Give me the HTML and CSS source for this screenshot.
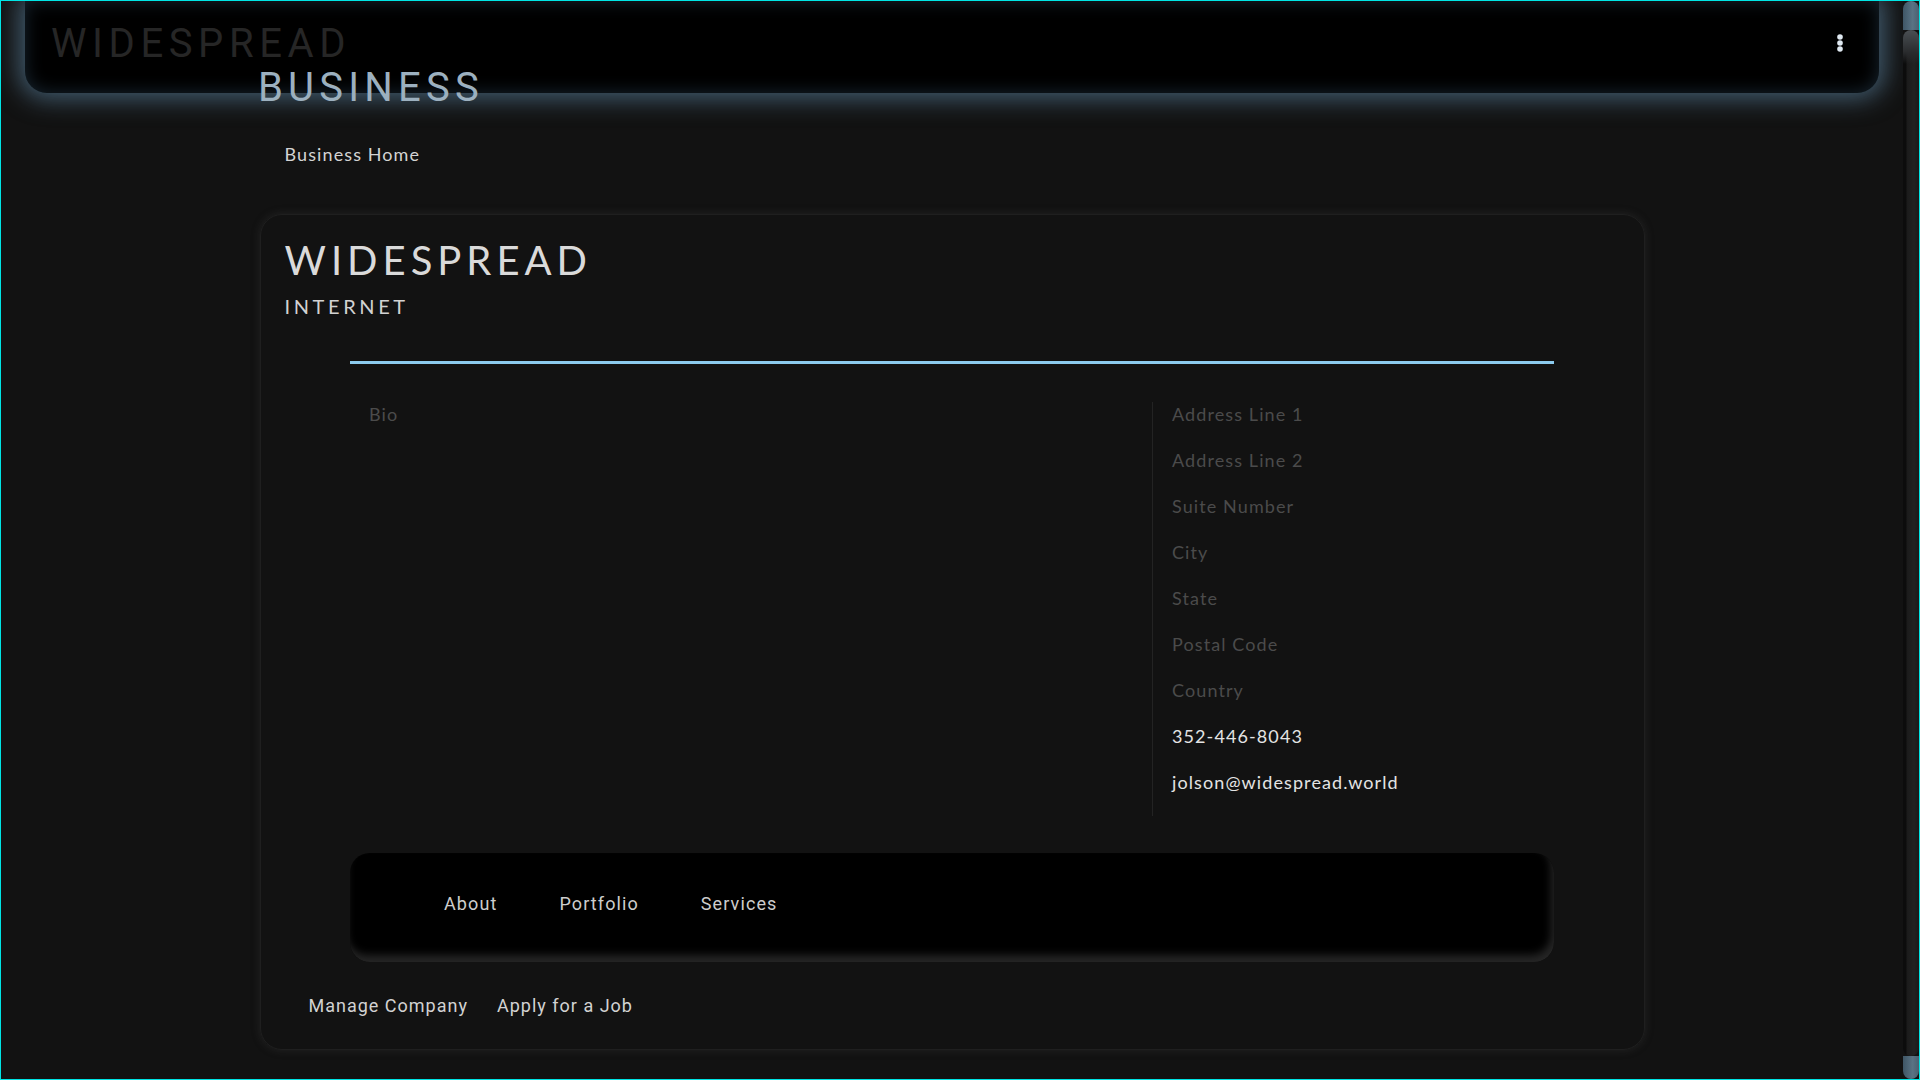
FILE: index.html
```html
<!DOCTYPE html>
<html lang="en">
<head>
<meta charset="utf-8">
<title>Widespread Business</title>
<link rel="stylesheet" href="styles.css">
</head>
<body>
<div class="frame">
  <div class="page">
    <header class="topbar">
      <div class="brand">
        <span class="brand-line1">WIDESPREAD</span>
        <span class="brand-line2">BUSINESS</span>
      </div>
      <button class="kebab" aria-label="menu">
        <svg width="8" height="20" viewBox="0 0 8 20"><circle cx="4" cy="4" r="2.8" fill="#dfe9f1"/><circle cx="4" cy="10" r="2.8" fill="#dfe9f1"/><circle cx="4" cy="16" r="2.8" fill="#dfe9f1"/></svg>
      </button>
    </header>

    <main class="main">
      <nav class="crumbs"><a href="#">Business Home</a></nav>

      <section class="card">
        <h1 class="title">WIDESPREAD</h1>
        <h2 class="subtitle">INTERNET</h2>

        <div class="rule"></div>

        <div class="details">
          <div class="bio">
            <div class="row placeholder">Bio</div>
          </div>
          <div class="address">
            <div class="row placeholder">Address Line 1</div>
            <div class="row placeholder">Address Line 2</div>
            <div class="row placeholder">Suite Number</div>
            <div class="row placeholder">City</div>
            <div class="row placeholder">State</div>
            <div class="row placeholder">Postal Code</div>
            <div class="row placeholder">Country</div>
            <div class="row value">352-446-8043</div>
            <div class="row value">jolson@widespread.world</div>
          </div>
        </div>

        <nav class="tabs">
          <a href="#">About</a>
          <a href="#">Portfolio</a>
          <a href="#">Services</a>
        </nav>

        <div class="actions">
          <a href="#">Manage Company</a>
          <a href="#">Apply for a Job</a>
        </div>
      </section>
    </main>
  </div>

  <div class="scrollbar">
    <div class="sb-btn sb-top"></div>
    <div class="sb-thumb"></div>
    <div class="sb-btn sb-bottom"></div>
  </div>
</div>
</body>
</html>
```

FILE: styles.css
```css
* { box-sizing: border-box; }

html, body {
  margin: 0;
  padding: 0;
  height: 100%;
  overflow: hidden;
  background: #121212;
}

body {
  font-family: Lato, "Open Sans", sans-serif;
  color: #d6d6d6;
}

a { color: inherit; text-decoration: none; }

.frame {
  width: 1920px;
  height: 1080px;
  border: 1px solid #00e5e5;
  display: flex;
  background: #121212;
}

.page {
  flex: 1;
  min-width: 0;
  overflow: hidden;
}

/* ---------- top bar ---------- */
.topbar {
  height: 92px;
  margin: 0 24px;
  background: #000;
  border-radius: 0 0 22px 22px;
  box-shadow: 0 0 24px 6px rgba(78, 112, 136, 0.78), inset 0 0 18px rgba(70, 110, 140, 0.35);
  display: flex;
  justify-content: space-between;
  align-items: flex-start;
  padding: 21px 30px 0 26px;
  position: relative;
  z-index: 2;
}

.brand {
  display: flex;
  flex-direction: column;
  font-family: Roboto, Lato, sans-serif;
  font-size: 40px;
  line-height: 44px;
  letter-spacing: 5.6px;
  white-space: nowrap;
}

.brand-line1 { color: #262626; }
.brand-line2 {
  margin-left: 207px;
  letter-spacing: 5.2px;
  color: #9cb0bf;
}

.kebab {
  margin-top: 11px;
  background: none;
  border: 0;
  padding: 0 5px;
  line-height: 0;
}

/* ---------- main ---------- */
.main {
  width: 1385px;
  margin: 0 auto;
}

.crumbs {
  padding: 50px 0 0 25px;
  font-size: 18px;
  line-height: 22px;
  letter-spacing: 1.1px;
  color: #d4d4d4;
}

.card {
  margin-top: 49px;
  border: 1px solid #1f1f1f;
  border-radius: 22px;
  box-shadow: 0 0 8px rgba(70, 70, 70, 0.35);
  padding: 21px 24px 32px;
}

.title {
  margin: 0;
  font-weight: 400;
  font-size: 40px;
  line-height: 48px;
  letter-spacing: 5px;
  color: #dadada;
}

.subtitle {
  margin: 10px 0 0;
  font-weight: 400;
  font-size: 20px;
  line-height: 24px;
  letter-spacing: 3.6px;
  color: #d2d2d2;
}

.rule {
  width: 1204px;
  height: 3px;
  margin: 43px auto 0;
  background: #8ccbee;
}

.details {
  width: 1204px;
  margin: 38px auto 0;
  display: grid;
  grid-template-columns: 802px 1fr;
}

.bio { padding-left: 19px; }

.address {
  border-left: 1px solid #232323;
  padding-left: 19px;
}

.row {
  height: 46px;
  padding-top: 1px;
  font-size: 18px;
  line-height: 22px;
  letter-spacing: 1.1px;
}

.placeholder { color: #4b4b4b; }
.value { color: #e4e4e4; }

.tabs {
  width: 1204px;
  height: 109px;
  margin: 37px auto 0;
  background: #000;
  border-radius: 20px;
  box-shadow: inset -3px -7px 8px rgba(40, 40, 40, 0.95);
  display: flex;
  align-items: center;
  padding: 0 0 8px 63px;
  font-family: Roboto, Lato, sans-serif;
  font-size: 18px;
  letter-spacing: 1.1px;
  color: #cdcdcd;
}

.tabs a { padding: 0 31px; }

.actions {
  margin-top: 33px;
  padding-left: 24px;
  display: flex;
  gap: 29px;
  font-family: Roboto, Lato, sans-serif;
  font-size: 18px;
  line-height: 22px;
  letter-spacing: 1px;
  color: #d2d2d2;
}

/* ---------- scrollbar ---------- */
.scrollbar {
  width: 16px;
  display: flex;
  flex-direction: column;
  background: #121212;
}

.sb-btn {
  background: linear-gradient(90deg, #3f5666, #5a7384 60%, #4a6070);
}

.sb-top {
  height: 29px;
  border-radius: 8px 8px 0 0;
}

.sb-bottom {
  height: 23px;
  border-radius: 0 0 8px 8px;
}

.sb-thumb {
  flex: 1;
  background:
    linear-gradient(180deg, #4a4f53 0, #2a2c2e 22px, rgba(26, 26, 26, 0) 34px),
    linear-gradient(90deg, #0c0c0c 0, #0c0c0c 3px, #1b1b1b 4px, #222 70%, #1a1a1a);
  border-radius: 8px;
}
```
